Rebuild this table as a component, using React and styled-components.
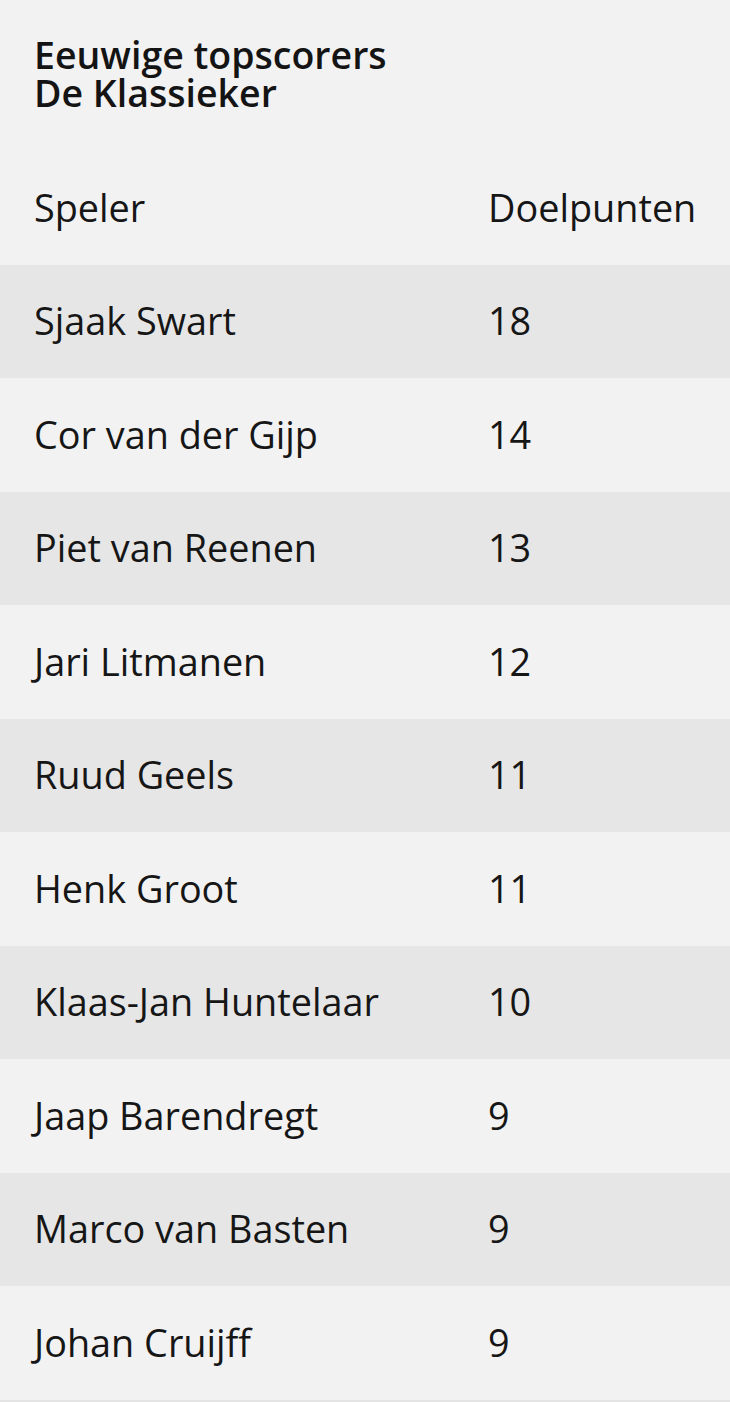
import React from 'react';
import styled, { createGlobalStyle } from 'styled-components';

const GlobalStyle = createGlobalStyle`
  html, body {
    margin: 0;
    padding: 0;
    background: #f2f2f2;
  }
  body {
    font-family: "Open Sans", "Noto Sans", sans-serif;
    color: #161616;
  }
`;

const scorers = [
  { name: 'Sjaak Swart', goals: 18 },
  { name: 'Cor van der Gijp', goals: 14 },
  { name: 'Piet van Reenen', goals: 13 },
  { name: 'Jari Litmanen', goals: 12 },
  { name: 'Ruud Geels', goals: 11 },
  { name: 'Henk Groot', goals: 11 },
  { name: 'Klaas-Jan Huntelaar', goals: 10 },
  { name: 'Jaap Barendregt', goals: 9 },
  { name: 'Marco van Basten', goals: 9 },
  { name: 'Johan Cruijff', goals: 9 },
];

function App() {
  return (
    <Wrapper>
      <GlobalStyle />
      <Title>
        <TitleLine>Eeuwige topscorers</TitleLine>
        <TitleLine>De Klassieker</TitleLine>
      </Title>
      <Table>
        <HeadRow>
          <Cell>Speler</Cell>
          <Cell>Doelpunten</Cell>
        </HeadRow>
        {scorers.map((s, i) => (
          <Row key={s.name} $striped={i % 2 === 0}>
            <Cell>{s.name}</Cell>
            <Cell>{s.goals}</Cell>
          </Row>
        ))}
      </Table>
    </Wrapper>
  );
}

export default App;

const Wrapper = styled.div`
  width: 730px;
  background: #f2f2f2;
  border-bottom: 2px solid #e4e4e4;
`;

const Title = styled.h2`
  margin: 0;
  padding: 36px 34px 0;
  height: 151px;
  box-sizing: border-box;
  display: flex;
  flex-direction: column;
  font-size: 37.5px;
  font-weight: 600;
  color: #141414;
`;

const TitleLine = styled.span`
  display: block;
  height: 38px;
  line-height: 38px;
`;

const Table = styled.div`
  display: flex;
  flex-direction: column;
`;

const Row = styled.div`
  display: grid;
  grid-template-columns: 454px 1fr;
  align-items: center;
  height: 113.5px;
  padding-left: 34px;
  background: ${(p) => (p.$striped ? '#e6e6e6' : '#f2f2f2')};
`;

const HeadRow = styled(Row)`
  background: #f2f2f2;
`;

const Cell = styled.div`
  font-size: 37.8px;
  line-height: 44px;
  font-weight: 400;
  white-space: nowrap;
`;
